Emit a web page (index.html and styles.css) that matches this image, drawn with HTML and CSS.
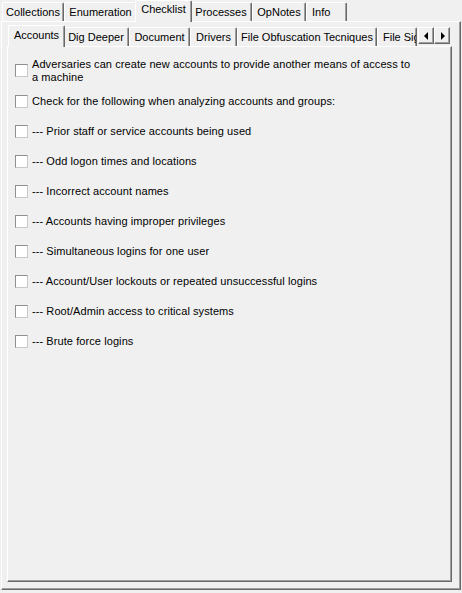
FILE: index.html
```html
<!DOCTYPE html>
<html>
<head>
<meta charset="utf-8">
<link rel="stylesheet" href="styles.css">
</head>
<body>
<div class="app">
  <div class="tabs outer-tabs">
    <div class="tab w-coll">Collections</div>
    <div class="tab w-enum">Enumeration</div>
    <div class="tab sel w-check">Checklist</div>
    <div class="tab w-proc">Processes</div>
    <div class="tab w-opn">OpNotes</div>
    <div class="tab w-info">Info</div>
  </div>
  <div class="panel outer-panel">
    <div class="inner">
      <div class="tabs inner-tabs">
        <div class="tab sel w-acc">Accounts</div>
        <div class="tab w-dig">Dig Deeper</div>
        <div class="tab w-doc">Document</div>
        <div class="tab w-drv">Drivers</div>
        <div class="tab w-obf">File Obfuscation Tecniques</div>
        <div class="tab w-sig">File Signatures</div>
        <div class="scroller">
          <div class="sbtn"><span class="tri left"></span></div>
          <div class="sbtn"><span class="tri right"></span></div>
        </div>
      </div>
      <div class="panel inner-panel">
        <div class="list">
          <label class="row first"><span class="cb"></span><span class="txt wrap">Adversaries can create new accounts to provide another means of access to a machine</span></label>
          <label class="row"><span class="cb"></span><span class="txt">Check for the following when analyzing accounts and groups:</span></label>
          <label class="row"><span class="cb"></span><span class="txt">--- Prior staff or service accounts being used</span></label>
          <label class="row"><span class="cb"></span><span class="txt">--- Odd logon times and locations</span></label>
          <label class="row"><span class="cb"></span><span class="txt">--- Incorrect account names</span></label>
          <label class="row"><span class="cb"></span><span class="txt">--- Accounts having improper privileges</span></label>
          <label class="row"><span class="cb"></span><span class="txt">--- Simultaneous logins for one user</span></label>
          <label class="row"><span class="cb"></span><span class="txt">--- Account/User lockouts or repeated unsuccessful logins</span></label>
          <label class="row"><span class="cb"></span><span class="txt">--- Root/Admin access to critical systems</span></label>
          <label class="row"><span class="cb"></span><span class="txt">--- Brute force logins</span></label>
        </div>
      </div>
    </div>
  </div>
</div>
</body>
</html>
```
FILE: styles.css
```css
* { box-sizing: border-box; }
html, body {
  margin: 0;
  padding: 0;
  background: #f0f0f0;
}
body {
  width: 462px;
  height: 593px;
  overflow: hidden;
  font-family: "Liberation Sans", Arial, sans-serif;
  font-size: 11px;
  color: #000;
}
.app {
  width: 462px;
}
.tabs {
  display: flex;
  align-items: flex-end;
  position: relative;
}
.outer-tabs {
  height: 21px;
  padding-left: 2px;
}
.tab {
  flex: none;
  height: 19px;
  border-top: 1px solid #fff;
  border-left: 1px solid #fff;
  border-right: 1px solid #696969;
  box-shadow: inset -1px 0 0 #a0a0a0;
  border-radius: 2px 2px 0 0;
  background: #f0f0f0;
  text-align: center;
  line-height: 18px;
  white-space: nowrap;
  overflow: hidden;
}
.tab.sel {
  height: 22px;
  margin: 0 -2px -1px -2px;
  position: relative;
  z-index: 2;
  line-height: 17px;
}
.w-coll { width: 62px; }
.w-enum { width: 73px; }
.w-check { width: 57px; }
.w-proc { width: 62px; }
.w-opn { width: 54px; }
.w-info { width: 41px; text-align: left; padding-left: 5px; }

.panel {
  border-top: 1px solid #fff;
  border-left: 1px solid #fff;
  border-right: 1px solid #696969;
  border-bottom: 1px solid #696969;
  box-shadow: inset -1px -1px 0 #a0a0a0;
  background: #f0f0f0;
}
.outer-panel {
  margin-left: 1px;
  width: 460px;
  height: 569px;
  position: relative;
  z-index: 1;
}
.inner {
  margin-left: 5px;
  width: 445px;
}
.inner-tabs {
  height: 24px;
  padding-left: 3px;
  width: 445px;
}
.inner-tabs .tab { line-height: 18px; }
.inner-tabs .tab.sel { line-height: 19px; }
.w-acc { width: 57px; }
.w-dig { width: 66px; }
.w-doc { width: 61px; }
.w-drv { width: 47px; }
.w-obf { width: 140px; }
.w-sig { width: 40px; text-align: left; padding-left: 5px; }

.scroller {
  position: absolute;
  left: 411px;
  top: 5px;
  display: flex;
  z-index: 3;
}
.sbtn {
  width: 16px;
  height: 17px;
  background: #f0f0f0;
  border-top: 1px solid #fff;
  border-left: 1px solid #fff;
  border-right: 1px solid #696969;
  border-bottom: 1px solid #696969;
  box-shadow: inset -1px -1px 0 #a0a0a0;
  display: flex;
  align-items: center;
  justify-content: center;
}
.tri {
  width: 0;
  height: 0;
  border-top: 4px solid transparent;
  border-bottom: 4px solid transparent;
}
.tri.left { border-right: 4px solid #000; margin-right: 1px; }
.tri.right { border-left: 4px solid #000; margin-left: 1px; }

.inner-panel {
  width: 445px;
  height: 536px;
  position: relative;
  z-index: 1;
}
.list {
  display: flex;
  flex-direction: column;
  padding: 8px 0 0 7px;
}
.row {
  display: flex;
  align-items: center;
  height: 30px;
}
.row.first { height: 31px; }
.cb {
  flex: none;
  width: 13px;
  height: 13px;
  background: #fff;
  border: 1px solid #8f8f8f;
  border-right-color: #c8c8c8;
  border-bottom-color: #c8c8c8;
  margin-right: 4px;
}
.txt {
  white-space: nowrap;
  line-height: 13px;
  letter-spacing: 0.08px;
}
.txt.wrap {
  white-space: normal;
  width: 384px;
}
```
